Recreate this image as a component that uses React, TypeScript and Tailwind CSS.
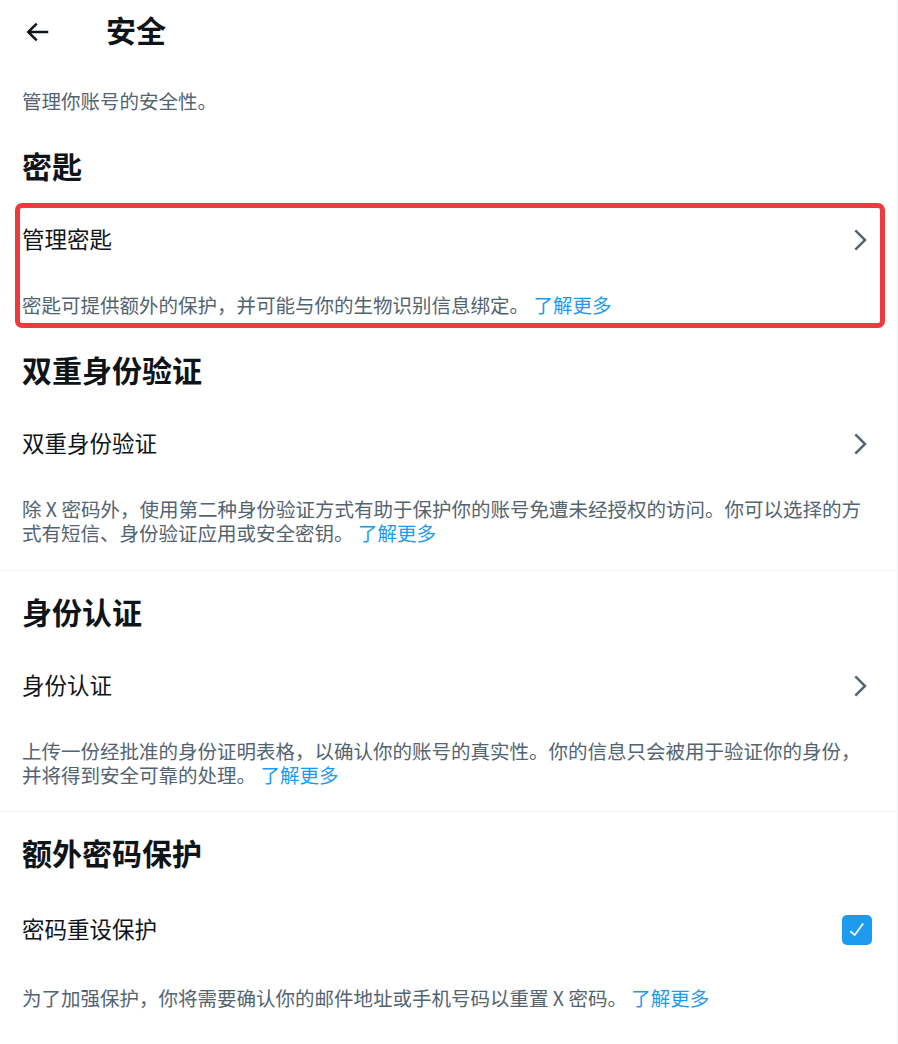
import React from "react";

const font = "font-['Noto_Sans_CJK_SC','Noto_Sans',sans-serif]";

function Chevron() {
  return (
    <svg viewBox="0 0 24 24" className="h-[30px] w-[30px] fill-[#536471]">
      <path d="M14.586 12L7.543 4.96l1.414-1.42L17.414 12l-8.457 8.46-1.414-1.42L14.586 12z" />
    </svg>
  );
}

function Checked() {
  return (
    <div className="mr-[3px] flex h-[30px] w-[30px] items-center justify-center rounded-[5px] bg-[#1d9bf0]">
      <svg viewBox="0 0 24 24" className="h-[22px] w-[22px] fill-white">
        <path d="M9.64 18.952l-5.55-4.861 1.317-1.504 3.951 3.459 8.5-11.675 1.617 1.178-9.835 13.403z" />
      </svg>
    </div>
  );
}

function Heading({ children, className = "" }: { children: React.ReactNode; className?: string }) {
  return (
    <h2 className={`h-9 text-[30px] leading-[30px] font-bold text-[#0f1419] ${className}`}>
      {children}
    </h2>
  );
}

function Item({
  label,
  right,
  className = "",
}: {
  label: string;
  right: React.ReactNode;
  className?: string;
}) {
  return (
    <div className={`flex h-[72px] items-center justify-between ${className}`}>
      <span className="mb-[4px] text-[22.5px] leading-7 text-[#0f1419]">{label}</span>
      {right}
    </div>
  );
}

function Desc({ text, className = "" }: { text: string; className?: string }) {
  return (
    <p className={`text-[19.5px] leading-6 text-[#536471] ${className}`}>
      <span>{text} </span>
      <a className="text-[#1d9bf0]">了解更多</a>
    </p>
  );
}

export default function App() {
  return (
    <div className={`min-h-[1044px] w-[898px] border-r border-[#eff3f4] bg-white ${font}`}>
      <header className="flex h-16 items-center px-[22px]">
        <svg viewBox="0 0 24 24" className="h-[30px] w-[30px] fill-[#0f1419]">
          <path d="M7.414 13l5.043 5.04-1.414 1.42L3.586 12l7.457-7.46 1.414 1.42L7.414 11H21v2H7.414z" />
        </svg>
        <h1 className="ml-[54px] pb-[6px] text-[30px] leading-[30px] font-bold text-[#0f1419]">
          安全
        </h1>
      </header>

      <p className="mt-[25px] px-[22px] text-[19.5px] leading-6 text-[#536471]">
        管理你账号的安全性。
      </p>

      <section className="mt-[37px] px-[22px]">
        <Heading>密匙</Heading>
        <div className="relative mt-[18px]">
          <Item label="管理密匙" right={<Chevron />} />
          <Desc className="mt-[17px]" text="密匙可提供额外的保护，并可能与你的生物识别信息绑定。" />
          <div className="pointer-events-none absolute -top-px -right-[10px] -bottom-[11px] -left-[7px] rounded-[7px] border-[5px] border-[#ef3a3d]" />
        </div>
      </section>

      <section className="mt-[37px] px-[22px] pb-[25px]">
        <Heading>双重身份验证</Heading>
        <Item className="mt-[18px]" label="双重身份验证" right={<Chevron />} />
        <Desc
          className="mt-[17px]"
          text="除 X 密码外，使用第二种身份验证方式有助于保护你的账号免遭未经授权的访问。你可以选择的方式有短信、身份验证应用或安全密钥。"
        />
      </section>

      <div className="h-px bg-[#eff3f4]" />

      <section className="mt-[25px] px-[22px] pb-[24px]">
        <Heading>身份认证</Heading>
        <Item className="mt-[18px]" label="身份认证" right={<Chevron />} />
        <Desc
          className="mt-[17px]"
          text="上传一份经批准的身份证明表格，以确认你的账号的真实性。你的信息只会被用于验证你的身份，并将得到安全可靠的处理。"
        />
      </section>

      <div className="h-px bg-[#eff3f4]" />

      <section className="mt-[25px] px-[22px]">
        <Heading>额外密码保护</Heading>
        <Item className="mt-[21px]" label="密码重设保护" right={<Checked />} />
        <Desc
          className="mt-[20px]"
          text="为了加强保护，你将需要确认你的邮件地址或手机号码以重置 X 密码。"
        />
      </section>
    </div>
  );
}
